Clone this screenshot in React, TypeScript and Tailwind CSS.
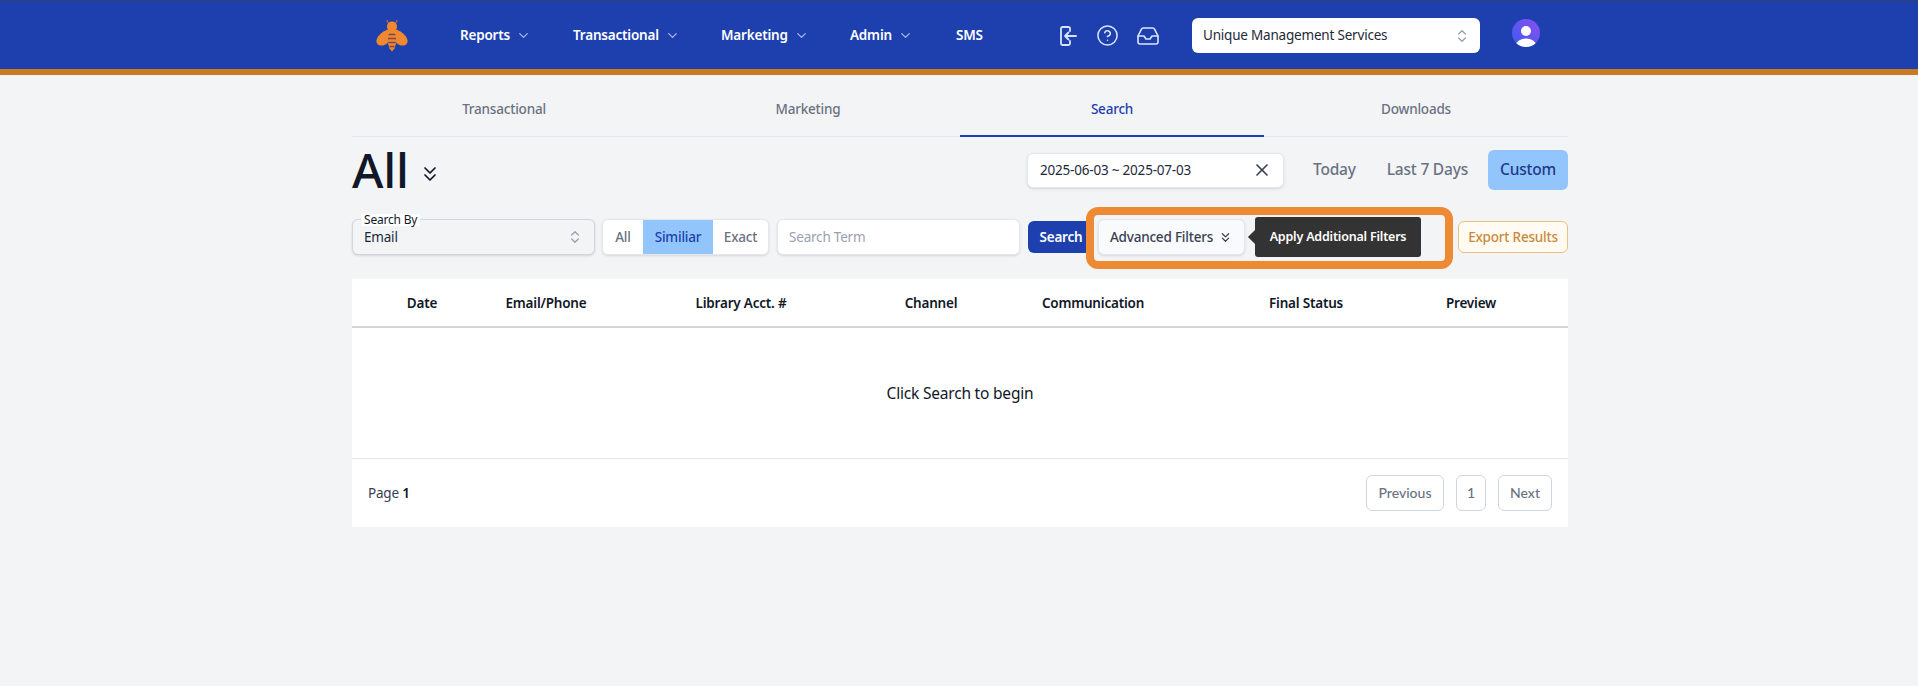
import React from 'react';
import { ChevronDown, ChevronsDown, ChevronsUpDown, CircleHelp, Inbox, X } from 'lucide-react';

const navItems = [
  { label: 'Reports', width: 'w-[113px]', arrow: true },
  { label: 'Transactional', width: 'w-[148px]', arrow: true },
  { label: 'Marketing', width: 'w-[129px]', arrow: true },
  { label: 'Admin', width: 'w-[106px]', arrow: true },
  { label: 'SMS', width: 'w-[60px]', arrow: false },
];

const tabs = ['Transactional', 'Marketing', 'Search', 'Downloads'];

const columns = ['Date', 'Email/Phone', 'Library Acct. #', 'Channel', 'Communication', 'Final Status', 'Preview'];

const BeeLogo = () => (
  <svg viewBox="0 0 32 34" className="h-[34px] w-8">
    <path d="M12.500 5.500L11 2.500M19.500 5.500L21 2.500" stroke="#b5683a" strokeWidth="1.300" strokeLinecap="round" />
    <path d="M13 11C8 12.500 1.500 17 .5 22c-.6 3.800 2.500 6 6 5.500 4-.6 7-4 8.500-8z" fill="#f0882f" />
    <path d="M19 11C24 12.500 30.500 17 31.500 22c.6 3.800-2.500 6-6 5.500-4-.6-7-4-8.500-8z" fill="#f0882f" />
    <circle cx="16" cy="8.500" r="5" fill="#f0882f" />
    <path d="M13 12h6l1.500 12-2 6.500-2.500 3-2.500-3-2-6.500z" fill="#f0882f" />
    <path d="M12.600 16.500h6.800M12 20.500h8M12.200 24.500h7.600M13.500 28.500h5" stroke="#7a4458" strokeWidth="1.500" />
  </svg>
);

const ExitIcon = () => (
  <svg viewBox="0 0 24 24" fill="none" stroke="currentColor" strokeWidth="1.800" strokeLinecap="round" strokeLinejoin="round" className="h-[24px] w-[24px]">
    <path d="M15 7V4.500A1.500 1.500 0 0 0 13.500 3h-6A1.500 1.500 0 0 0 6 4.500v15A1.500 1.500 0 0 0 7.500 21h6a1.500 1.500 0 0 0 1.500-1.500V17" />
    <path d="M21 12H10m0 0l3.500-3.500M10 12l3.500 3.500" />
  </svg>
);

const Avatar = () => (
  <svg viewBox="0 0 28 28" className="h-7 w-7">
    <defs>
      <linearGradient id="avatar-bg" x1="0" y1="1" x2="1" y2="0">
        <stop offset="0" stopColor="#3b5bf0" />
        <stop offset="1" stopColor="#8b4ff0" />
      </linearGradient>
      <clipPath id="avatar-clip">
        <circle cx="14" cy="14" r="14" />
      </clipPath>
    </defs>
    <circle cx="14" cy="14" r="14" fill="url(#avatar-bg)" />
    <g clipPath="url(#avatar-clip)" fill="#fff">
      <circle cx="14" cy="12" r="5" />
      <ellipse cx="14" cy="26" rx="10" ry="6.500" />
    </g>
  </svg>
);

const Header = () => (
  <header className="h-[75px] border-b-[6px] border-[#c87a20] border-t-2 border-t-[#26428f] bg-[#1e40af]">
    <div className="ml-[352px] flex h-full w-[1216px] items-center">
      <div className="flex w-[108px] pl-[24px] -mt-[1px]">
        <BeeLogo />
      </div>
      <nav className="flex items-center">
        {navItems.map((item) => (
          <div key={item.label} className={`flex items-center gap-[6px] ${item.width} text-[13.5px] font-semibold text-white`}>
            {item.label}
            {item.arrow && <ChevronDown size={15} className="text-[#a9b8e8]" />}
          </div>
        ))}
      </nav>
      <div className="ml-[39px] flex items-center gap-[17px] text-[#dbe4ff]">
        <ExitIcon />
        <CircleHelp size={23} strokeWidth={1.6} />
        <Inbox size={24} strokeWidth={1.6} />
      </div>
      <div className="ml-[32px] flex h-[35px] w-[288px] items-center justify-between rounded-md bg-white pl-[11px] pr-[10px] text-[13.5px] text-gray-800">
        Unique Management Services
        <ChevronsUpDown size={16} className="text-gray-400" />
      </div>
      <div className="ml-[32px] -mt-[6px]">
        <Avatar />
      </div>
    </div>
  </header>
);

const Tabs = () => (
  <div className="flex h-[62px] border-b border-gray-200">
    {tabs.map((tab) => (
      <div
        key={tab}
        className={`flex flex-1 items-center justify-center pt-[8px] text-[13.5px] font-medium ${
          tab === 'Search' ? '-mb-px border-b-2 border-[#1e40af] text-[#1e40af]' : 'text-gray-500'
        }`}
      >
        {tab}
      </div>
    ))}
  </div>
);

const TitleRow = () => (
  <div className="mt-[13px] flex h-[40px] items-center justify-between">
    <div className="flex items-center gap-[9px]">
      <h1 className="text-5xl font-medium text-gray-900">All</h1>
      <ChevronsDown size={24} strokeWidth={1.75} className="mt-[7px] text-gray-900" />
    </div>
    <div className="flex items-center">
      <div className="flex h-[35px] w-[257px] items-center justify-between rounded-md border border-gray-200 bg-white pl-[12px] pr-[11px] text-[13.5px] text-gray-800 shadow-sm">
        2025-06-03 ~ 2025-07-03
        <X size={20} className="text-gray-700" />
      </div>
      <button className="ml-[17px] h-[40px] px-[12px] text-[15.5px] font-medium text-gray-500">Today</button>
      <button className="ml-[7px] h-[40px] px-[12px] text-[15.5px] font-medium text-gray-500">Last 7 Days</button>
      <button className="ml-[8px] h-[40px] w-[80px] rounded-md bg-[#93c5fd] text-[15.5px] font-medium text-[#1e3a8a]">Custom</button>
    </div>
  </div>
);

const FilterRow = () => (
  <div className="relative mt-[29px] flex h-[36px] items-center">
    <div className="relative flex h-[36px] w-[243px] items-center justify-between rounded-md border border-gray-300 bg-gray-100 pl-[11px] pr-[11px] text-[13.5px] text-gray-800 shadow-sm">
      <span className="absolute -top-[6px] left-[8px] bg-white px-[3px] text-xs leading-[12px] text-gray-900">Search By</span>
      <span className="pt-[1px]">Email</span>
      <ChevronsUpDown size={16} className="text-gray-400" />
    </div>
    <div className="ml-[7px] flex h-[36px] w-[167px] overflow-hidden rounded-md border border-gray-200 bg-white text-[13.5px] font-medium text-gray-500 shadow-sm">
      <div className="flex w-[40px] items-center justify-center">All</div>
      <div className="flex w-[70px] items-center justify-center bg-[#93c5fd] text-[#1e40af]">Similiar</div>
      <div className="flex flex-1 items-center justify-center">Exact</div>
    </div>
    <div className="ml-[8px] flex h-[36px] w-[243px] items-center rounded-md border border-gray-200 bg-white pl-[11px] text-[13.5px] text-gray-400 shadow-sm">
      Search Term
    </div>
    <button className="ml-[8px] h-[32px] w-[66px] rounded-md bg-[#1e40af] text-[13.5px] font-semibold text-white">Search</button>
    <button className="ml-[4px] flex h-[36px] w-[147px] items-center justify-center gap-[5px] rounded-md border border-gray-200 bg-gray-50 text-[13.5px] font-medium text-gray-700 shadow-sm">
      Advanced Filters
      <ChevronsDown size={15} />
    </button>
    <div className="relative ml-[10px] flex h-[40px] w-[166px] items-center justify-center rounded-[3px] bg-[#333333] text-[12.5px] font-semibold text-white">
      <span className="absolute -left-[5px] top-1/2 h-[10px] w-[10px] -translate-y-1/2 rotate-45 bg-[#333333]" />
      <span className="relative">Apply Additional Filters</span>
    </div>
    <button className="ml-auto h-[32px] w-[110px] rounded-md border border-[#e9c27f] bg-[#fffbf3] text-[13.5px] font-medium text-[#c98a3c]">Export Results</button>
    <div className="pointer-events-none absolute left-[734px] top-[-12px] h-[62px] w-[367px] rounded-[12px] border-[8px] border-[#ed8a33]" />
  </div>
);

const ResultsTable = () => (
  <div className="mt-[24px] bg-white">
    <div className="grid h-[49px] grid-cols-[140px_108px_282px_98px_226px_200px_130px_32px] items-center border-b-2 border-gray-300 pt-[2px] text-[13.5px] font-semibold text-gray-900">
      {columns.map((col) => (
        <div key={col} className="text-center">{col}</div>
      ))}
    </div>
    <div className="flex h-[131px] items-center justify-center border-b border-gray-200 pt-[2px] text-[15.5px] text-gray-900">
      Click Search to begin
    </div>
    <div className="flex h-[68px] items-center justify-between px-[16px]">
      <span className="text-[13.5px] text-gray-700">
        Page <span className="font-semibold text-gray-900">1</span>
      </span>
      <div className="flex items-center gap-[12px] font-['Lato',sans-serif] text-sm font-medium tracking-normal text-gray-500">
        <button className="h-[36px] w-[78px] rounded-md border border-gray-300">Previous</button>
        <button className="h-[36px] w-[30px] rounded-md border border-gray-300">1</button>
        <button className="h-[36px] w-[54px] rounded-md border border-gray-300">Next</button>
      </div>
    </div>
  </div>
);

export default function App() {
  return (
    <div className="min-h-[686px] bg-[#f3f4f6] font-['Noto_Sans',sans-serif] tracking-[-0.2px]">
      <Header />
      <main className="ml-[352px] w-[1216px]">
        <Tabs />
        <TitleRow />
        <FilterRow />
        <ResultsTable />
      </main>
    </div>
  );
}
